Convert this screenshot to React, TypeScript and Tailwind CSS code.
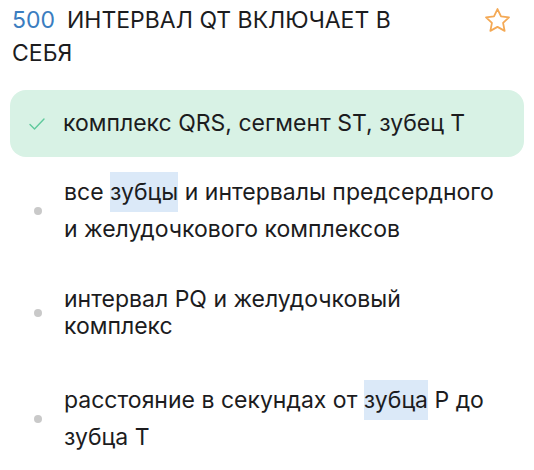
import React from 'react';

const Dot = () => <span className="block w-[8px] h-[8px] rounded-full bg-[#c9c9c9]" />;

const Mark = ({ children }: { children: React.ReactNode }) => (
  <span className="bg-[#dbe9f8] py-[6px]">{children}</span>
);

export default function App() {
  return (
    <div className="w-[534px] h-[470px] bg-white overflow-hidden text-[#1c1c1e]" style={{ fontFamily: 'Inter, "Noto Sans", sans-serif' }}>
      <div className="flex items-start pl-3 pr-6 pt-[4px]">
        <h1 className="flex-1 text-[23px] leading-[33px] font-normal">
          <span className="text-[#3a7dc0] mr-[12px]">500</span>
          ИНТЕРВАЛ QT ВКЛЮЧАЕТ В<br />СЕБЯ
        </h1>
        <svg width="29" height="29" viewBox="0 0 24 24" className="mt-[2px] -mr-[2px]" fill="none" stroke="#f4a955" strokeWidth="1.5" strokeLinejoin="round">
          <path d="M12 2.5l2.9 6.1 6.6.8-4.9 4.6 1.3 6.6L12 17.3l-5.9 3.3 1.3-6.6-4.9-4.6 6.6-.8z" />
        </svg>
      </div>

      <div className="mx-[10px] mt-[20px] h-[67px] rounded-[16px] bg-[#d8f2e5] flex items-center">
        <svg width="16" height="12" viewBox="0 0 16 12" className="ml-[19px] mr-[18px]" fill="none" stroke="#5fc99c" strokeWidth="1.4" strokeLinecap="round" strokeLinejoin="round">
          <path d="M1 6.5l4.5 4.5L15 1" />
        </svg>
        <span className="text-[23px]">комплекс QRS, сегмент ST, зубец Т</span>
      </div>

      <div className="flex items-center mt-[17px]">
        <div className="w-[64px] pl-[34px]"><Dot /></div>
        <p className="text-[23px] leading-[37px]">
          все <Mark>зубцы</Mark> и интервалы предсердного<br />и желудочкового комплексов
        </p>
      </div>

      <div className="flex items-center mt-[38px]">
        <div className="w-[64px] pl-[34px]"><Dot /></div>
        <p className="text-[23px] leading-[27px]">
          интервал PQ и желудочковый<br />комплекс
        </p>
      </div>

      <div className="flex items-center mt-[42px]">
        <div className="w-[64px] pl-[34px]"><Dot /></div>
        <p className="text-[23px] leading-[37px]">
          расстояние в секундах от <Mark>зубца</Mark> Р до<br />зубца Т
        </p>
      </div>
    </div>
  );
}
